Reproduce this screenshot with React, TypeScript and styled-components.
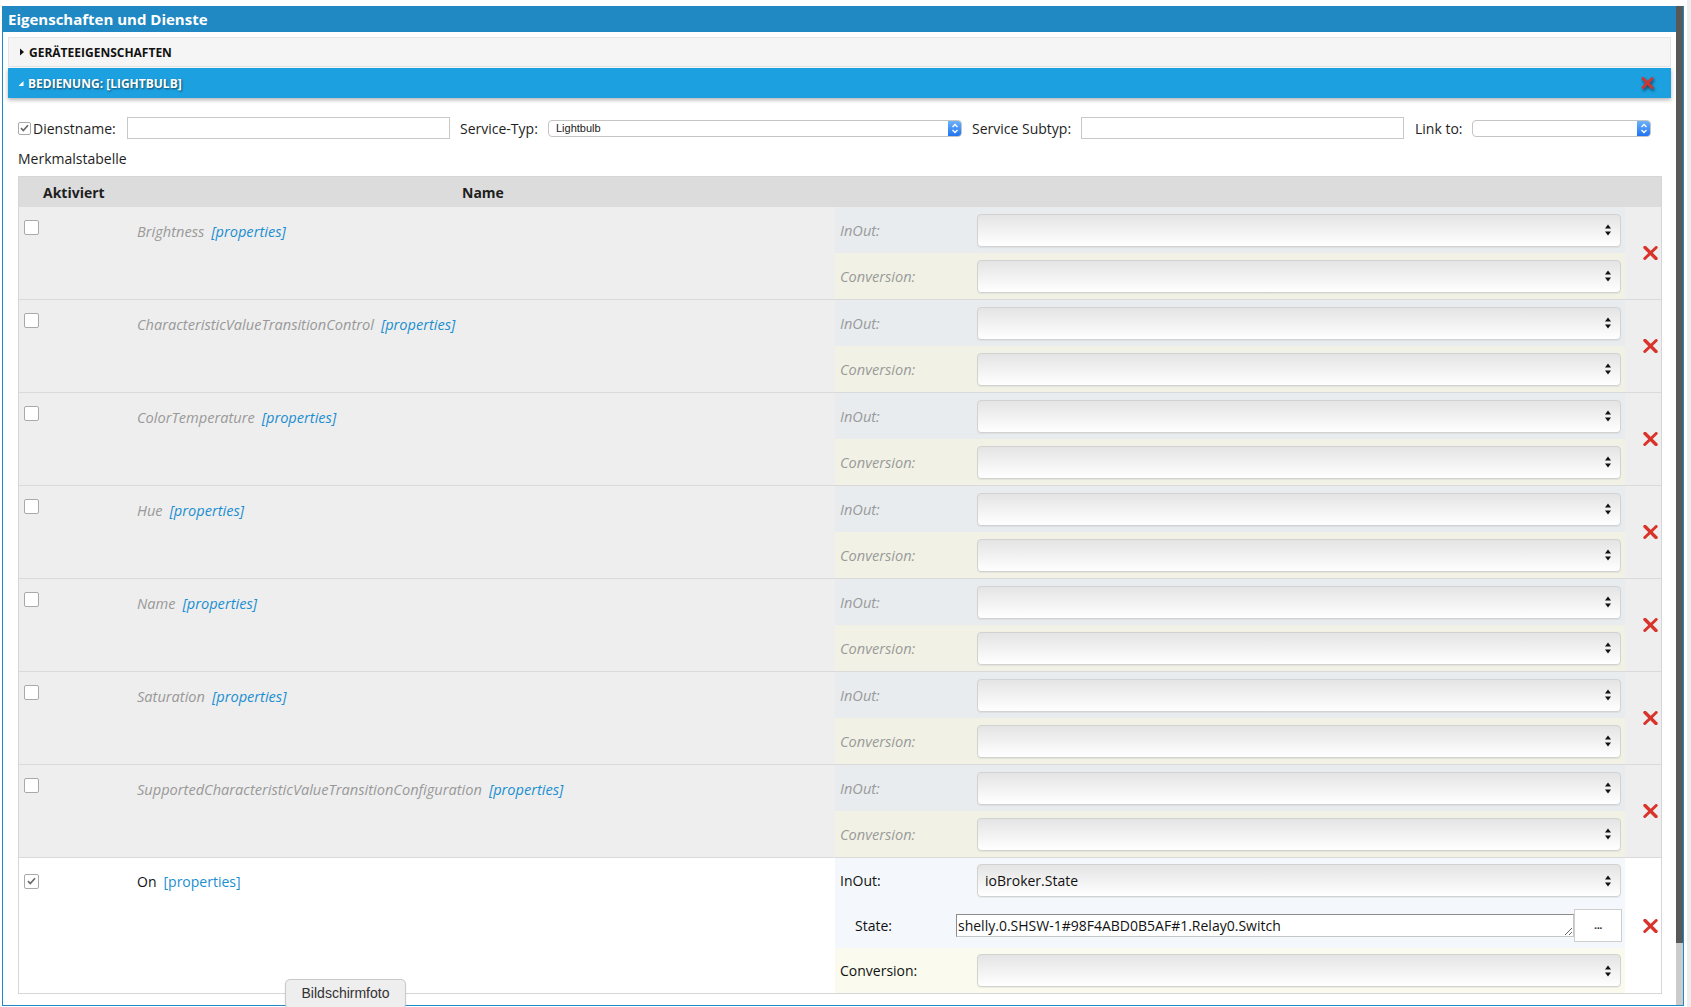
import React from "react";
import styled, { createGlobalStyle, css } from "styled-components";

const GlobalStyle = createGlobalStyle`
  html, body { margin: 0; padding: 0; background: #fff; }
  body { font-family: "Open Sans", "Liberation Sans", sans-serif; font-size: 14px; color: #1e1e1e; }
  * { box-sizing: border-box; }
`;

const Page = styled.div`
  position: relative;
  width: 1691px;
  height: 1007px;
  overflow: hidden;
  display: flex;
  align-items: flex-start;
  padding-left: 2px;
`;

const Panel = styled.div`
  margin-top: 6px;
  width: 1682px;
  height: 1000px;
  display: flex;
  border: 1px solid #2088c2;
  border-top: none;
`;

const Main = styled.div`
  flex: 1;
  min-width: 0;
  display: flex;
  flex-direction: column;
  overflow: hidden;
`;

const TitleBar = styled.div`
  height: 26px;
  flex: none;
  background: #2088c2;
  color: #fff;
  font-weight: 700;
  font-size: 15px;
  line-height: 26px;
  padding-left: 5px;
`;

const Content = styled.div`
  padding: 5px 5px 0 5px;
  display: flex;
  flex-direction: column;
  gap: 1px;
`;

const AccHeader = styled.div<{ $open?: boolean }>`
  height: 30px;
  display: flex;
  align-items: center;
  padding-left: 10px;
  font-size: 12px;
  font-weight: 700;
  text-transform: uppercase;
  ${(p) =>
    p.$open
      ? css`
          background: #1ca0e0;
          color: #fff;
          text-shadow: 1px 1px 2px rgba(0, 0, 0, 0.55);
          box-shadow: 0 2px 4px rgba(0, 0, 0, 0.3);
        `
      : css`
          background: #f5f5f5;
          border: 1px solid #e6e6e6;
          color: #111;
        `}
`;

const Tri = styled.svg`
  width: 6px;
  height: 8px;
  margin-right: 4px;
  flex: none;
`;

const HeaderClose = styled.svg`
  margin-left: auto;
  margin-right: 17px;
  width: 13px;
  height: 12px;
  filter: drop-shadow(1px 2px 1.5px rgba(0, 0, 0, 0.55));
`;

const Body = styled.div`
  padding: 18px 9px 0 10px;
`;

const FormRow = styled.div`
  display: flex;
  align-items: center;
  height: 22px;
`;

const BoxCheck = styled.span<{ $size: number }>`
  width: ${(p) => p.$size}px;
  height: ${(p) => p.$size}px;
  flex: none;
  display: inline-flex;
  align-items: center;
  justify-content: center;
  background: #fff;
  border: 1px solid #a9a9a9;
  border-radius: 2px;
`;

const FormLabel = styled.span<{ $w: number; $pl?: number; $ml?: number }>`
  width: ${(p) => p.$w}px;
  padding-left: ${(p) => p.$pl ?? 0}px;
  margin-left: ${(p) => p.$ml ?? 0}px;
  flex: none;
  font-size: 14px;
  white-space: nowrap;
  color: #1e1e1e;
`;

const TextInput = styled.div<{ $w: number }>`
  width: ${(p) => p.$w}px;
  height: 22px;
  flex: none;
  border: 1px solid #c8c8c8;
  background: #fff;
`;

const MacSelect = styled.div<{ $w: number }>`
  width: ${(p) => p.$w}px;
  height: 17px;
  flex: none;
  display: flex;
  align-items: center;
  border: 1px solid #c4c4c4;
  border-radius: 4px;
  background: #fff;
  font-family: "Liberation Sans", Arial, sans-serif;
  font-size: 11px;
  color: #222;
  overflow: hidden;
`;

const MacSelectText = styled.span`
  flex: 1;
  padding-left: 7px;
`;

const MacArrow = styled.span`
  width: 14px;
  height: 17px;
  margin: -1px -1px -1px 0;
  display: flex;
  align-items: center;
  justify-content: center;
  background: linear-gradient(#72b6fb, #1b6ff1);
  border-radius: 0 4px 4px 0;
`;

const SectionLabel = styled.div`
  margin: 10px 0 7px;
  line-height: 20px;
  font-size: 14px;
`;

const Table = styled.div`
  width: 1644px;
  border: 1px solid #d6d6d6;
`;

const HeadRow = styled.div`
  height: 30px;
  display: flex;
  align-items: center;
  background: #dcdcdc;
  font-weight: 700;
  font-size: 14px;
`;

const HeadCell = styled.div<{ $w?: number; $pl: number }>`
  ${(p) => (p.$w ? `width: ${p.$w}px; flex: none;` : "flex: 1;")}
  padding-left: ${(p) => p.$pl}px;
`;

const DataRow = styled.div<{ $active?: boolean; $last?: boolean }>`
  display: grid;
  grid-template-columns: 118px 698px 790px 36px;
  background: ${(p) => (p.$active ? "#fff" : "#eeeeee")};
  border-bottom: ${(p) => (p.$last ? "none" : "1px solid #dadada")};
`;

const CheckCell = styled.div`
  padding: 13px 0 0 5px;
`;

const NameCell = styled.div`
  padding-top: 14px;
  line-height: 20px;
  font-size: 14px;
`;

const NameText = styled.span<{ $active?: boolean }>`
  color: ${(p) => (p.$active ? "#111" : "#999")};
  font-style: ${(p) => (p.$active ? "normal" : "italic")};
  font-size: ${(p) => (p.$active ? "14px" : "14.6px")};
`;

const PropLink = styled.span<{ $active?: boolean }>`
  margin-left: 7px;
  color: #1b8ed1;
  font-style: ${(p) => (p.$active ? "normal" : "italic")};
  font-size: ${(p) => (p.$active ? "14px" : "14.6px")};
`;

const MapCell = styled.div`
  display: flex;
  flex-direction: column;
`;

const SubRow = styled.div<{ $kind: "inout" | "conv"; $active?: boolean; $h: number }>`
  height: ${(p) => p.$h}px;
  display: flex;
  align-items: center;
  background: ${(p) =>
    p.$kind === "inout"
      ? p.$active
        ? "#f4f8fc"
        : "#e8ecef"
      : p.$active
      ? "#fafbee"
      : "#f1f2e5"};
`;

const SubLabel = styled.span<{ $active?: boolean; $w: number; $pl: number }>`
  width: ${(p) => p.$w}px;
  padding-left: ${(p) => p.$pl}px;
  flex: none;
  font-size: ${(p) => (p.$active ? "14px" : "14.6px")};
  color: ${(p) => (p.$active ? "#111" : "#9a9a9a")};
  font-style: ${(p) => (p.$active ? "normal" : "italic")};
`;

const SelectBox = styled.div`
  width: 644px;
  height: 33px;
  flex: none;
  display: flex;
  align-items: center;
  justify-content: space-between;
  padding: 0 9px 0 7px;
  border: 1px solid #d2d2d2;
  border-radius: 4px;
  background: linear-gradient(#e4e4e4, #ffffff);
  box-shadow: 0 1px 1px rgba(0, 0, 0, 0.06);
  font-size: 14px;
  color: #111;
`;

const StateInput = styled.textarea`
  width: 618px;
  height: 23px;
  flex: none;
  margin: 0;
  padding: 1px 1px;
  border: 1px solid #8c8c8c;
  border-right-color: #c5c5c5;
  border-bottom-color: #c5c5c5;
  font-family: "Open Sans", "Liberation Sans", sans-serif;
  font-size: 14px;
  line-height: 19px;
  color: #111;
  background: #fff;
  resize: both;
  overflow: hidden;
  white-space: nowrap;
`;

const DotsButton = styled.div`
  width: 48px;
  height: 33px;
  flex: none;
  display: flex;
  align-items: center;
  justify-content: center;
  border: 1px solid #cfcfcf;
  background: #fff;
  font-size: 11px;
  font-weight: 700;
  letter-spacing: -0.5px;
  color: #333;
  padding-bottom: 3px;
`;

const XCell = styled.div`
  display: flex;
  align-items: center;
  padding-left: 18px;
`;

const RowX = styled.svg`
  width: 15px;
  height: 14px;
`;

const Scrollbar = styled.div`
  width: 7px;
  flex: none;
  display: flex;
  flex-direction: column;
  background: #cbcbcb;
`;

const Thumb = styled.div`
  height: 937px;
  background: #585858;
`;

const EdgeStrip = styled.div`
  margin-left: 3px;
  width: 4px;
  height: 1007px;
  background: #ededed;
  flex: none;
`;

const Tooltip = styled.div`
  position: absolute;
  left: 285px;
  top: 979px;
  width: 121px;
  height: 30px;
  background: #eeeeee;
  border: 1px solid #c9c9c9;
  border-radius: 5px;
  font-family: "Liberation Sans", Arial, sans-serif;
  font-size: 14px;
  line-height: 27px;
  text-align: center;
  color: #333;
  box-shadow: 0 1px 2px rgba(0, 0, 0, 0.1);
`;

const Check = () => (
  <svg width="11" height="10" viewBox="0 0 11 10">
    <path d="M2 5.2 L4.3 7.5 L9 2.2" fill="none" stroke="#6a6a6a" strokeWidth="1.7" />
  </svg>
);

const UpDown = () => (
  <svg width="6" height="12" viewBox="0 0 6 12">
    <path d="M0 4.5 L3 0.5 L6 4.5 Z M0 7.5 L3 11.5 L6 7.5 Z" fill="#111" />
  </svg>
);

const MacChevrons = () => (
  <svg width="8" height="11" viewBox="0 0 8 11">
    <path d="M1.5 4 L4 1.5 L6.5 4 M1.5 7 L4 9.5 L6.5 7" fill="none" stroke="#fff" strokeWidth="1.3" />
  </svg>
);

const CrossIcon = () => (
  <RowX viewBox="0 0 15 14">
    <path d="M2 1.5 L13 12.5" stroke="#d8342b" strokeWidth="3.4" strokeLinecap="round" />
    <path d="M13.2 1.5 L1.8 12.5" stroke="#d8342b" strokeWidth="3" strokeLinecap="round" />
  </RowX>
);

const chars = [
  "Brightness",
  "CharacteristicValueTransitionControl",
  "ColorTemperature",
  "Hue",
  "Name",
  "Saturation",
  "SupportedCharacteristicValueTransitionConfiguration",
];

export default function App() {
  return (
    <>
      <GlobalStyle />
      <Page>
        <Panel>
          <Main>
            <TitleBar>Eigenschaften und Dienste</TitleBar>
            <Content>
              <AccHeader>
                <Tri viewBox="0 0 6 8">
                  <path d="M1 0.5 L5 4 L1 7.5 Z" fill="#111" />
                </Tri>
                Geräteeigenschaften
              </AccHeader>
              <AccHeader $open>
                <Tri viewBox="0 0 6 8">
                  <path d="M5.5 2 L5.5 7 L0.5 7 Z" fill="#fff" />
                </Tri>
                Bedienung: [Lightbulb]
                <HeaderClose viewBox="0 0 13 12">
                  <path d="M2 1.5 L11 10.5" stroke="#d0362f" strokeWidth="3" strokeLinecap="round" />
                  <path d="M11 1.5 L2 10.5" stroke="#d0362f" strokeWidth="2.8" strokeLinecap="round" />
                </HeaderClose>
              </AccHeader>
              <Body>
                <FormRow>
                  <BoxCheck $size={13}>
                    <Check />
                  </BoxCheck>
                  <FormLabel $w={96} $pl={2}>
                    Dienstname:
                  </FormLabel>
                  <TextInput $w={323} />
                  <FormLabel $w={88} $ml={10}>
                    Service-Typ:
                  </FormLabel>
                  <MacSelect $w={414}>
                    <MacSelectText>Lightbulb</MacSelectText>
                    <MacArrow>
                      <MacChevrons />
                    </MacArrow>
                  </MacSelect>
                  <FormLabel $w={109} $ml={10}>
                    Service Subtyp:
                  </FormLabel>
                  <TextInput $w={323} />
                  <FormLabel $w={57} $ml={11}>
                    Link to:
                  </FormLabel>
                  <MacSelect $w={179}>
                    <MacSelectText />
                    <MacArrow>
                      <MacChevrons />
                    </MacArrow>
                  </MacSelect>
                </FormRow>
                <SectionLabel>Merkmalstabelle</SectionLabel>
                <Table>
                  <HeadRow>
                    <HeadCell $w={443} $pl={24}>
                      Aktiviert
                    </HeadCell>
                    <HeadCell $pl={0}>Name</HeadCell>
                  </HeadRow>
                  {chars.map((c) => (
                    <DataRow key={c}>
                      <CheckCell>
                        <BoxCheck $size={15} />
                      </CheckCell>
                      <NameCell>
                        <NameText>{c}</NameText>
                        <PropLink>[properties]</PropLink>
                      </NameCell>
                      <MapCell>
                        <SubRow $kind="inout" $h={46}>
                          <SubLabel $w={142} $pl={5}>
                            InOut:
                          </SubLabel>
                          <SelectBox>
                            <span />
                            <UpDown />
                          </SelectBox>
                        </SubRow>
                        <SubRow $kind="conv" $h={46}>
                          <SubLabel $w={142} $pl={5}>
                            Conversion:
                          </SubLabel>
                          <SelectBox>
                            <span />
                            <UpDown />
                          </SelectBox>
                        </SubRow>
                      </MapCell>
                      <XCell>
                        <CrossIcon />
                      </XCell>
                    </DataRow>
                  ))}
                  <DataRow $active $last>
                    <CheckCell>
                      <BoxCheck $size={15}>
                        <Check />
                      </BoxCheck>
                    </CheckCell>
                    <NameCell>
                      <NameText $active>On</NameText>
                      <PropLink $active>[properties]</PropLink>
                    </NameCell>
                    <MapCell>
                      <SubRow $kind="inout" $active $h={45}>
                        <SubLabel $active $w={142} $pl={5}>
                          InOut:
                        </SubLabel>
                        <SelectBox>
                          <span>ioBroker.State</span>
                          <UpDown />
                        </SelectBox>
                      </SubRow>
                      <SubRow $kind="inout" $active $h={45}>
                        <SubLabel $active $w={121} $pl={20}>
                          State:
                        </SubLabel>
                        <StateInput readOnly rows={1} value="shelly.0.SHSW-1#98F4ABD0B5AF#1.Relay0.Switch" />
                        <DotsButton>...</DotsButton>
                      </SubRow>
                      <SubRow $kind="conv" $active $h={45}>
                        <SubLabel $active $w={142} $pl={5}>
                          Conversion:
                        </SubLabel>
                        <SelectBox>
                          <span />
                          <UpDown />
                        </SelectBox>
                      </SubRow>
                    </MapCell>
                    <XCell>
                      <CrossIcon />
                    </XCell>
                  </DataRow>
                </Table>
              </Body>
            </Content>
          </Main>
          <Scrollbar>
            <Thumb />
          </Scrollbar>
        </Panel>
        <EdgeStrip />
        <Tooltip>Bildschirmfoto</Tooltip>
      </Page>
    </>
  );
}
